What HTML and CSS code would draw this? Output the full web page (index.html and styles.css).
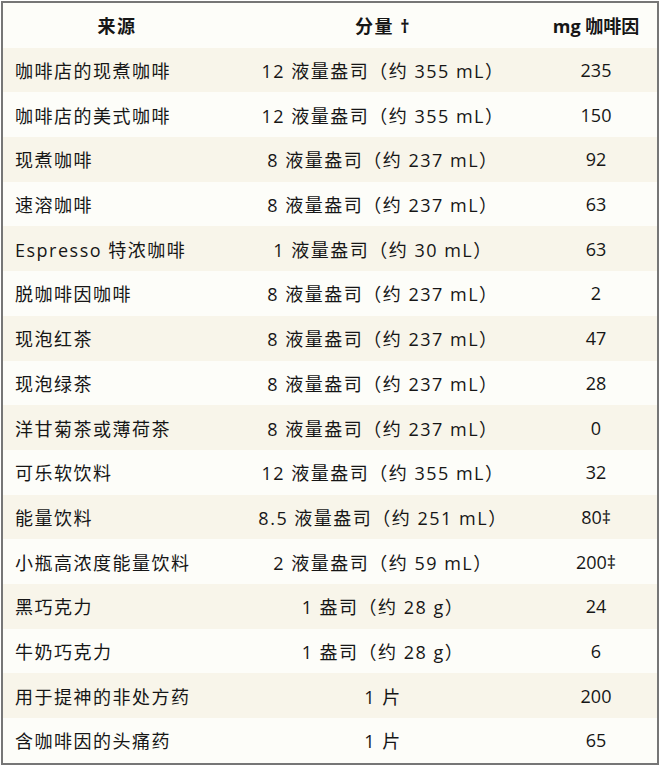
FILE: index.html
```html
<!DOCTYPE html>
<html lang="zh-CN">
<head>
<meta charset="utf-8">
<link rel="stylesheet" href="styles.css">
</head>
<body>
<div class="table">
  <div class="row head">
    <div class="c1">来源</div><div class="c2">分量 †</div><div class="c3">mg 咖啡因</div>
  </div>
  <div class="row">
    <div class="c1">咖啡店的现煮咖啡</div><div class="c2">12 液量盎司（约 355 mL）</div><div class="c3">235</div>
  </div>
  <div class="row">
    <div class="c1">咖啡店的美式咖啡</div><div class="c2">12 液量盎司（约 355 mL）</div><div class="c3">150</div>
  </div>
  <div class="row">
    <div class="c1">现煮咖啡</div><div class="c2">8 液量盎司（约 237 mL）</div><div class="c3">92</div>
  </div>
  <div class="row">
    <div class="c1">速溶咖啡</div><div class="c2">8 液量盎司（约 237 mL）</div><div class="c3">63</div>
  </div>
  <div class="row">
    <div class="c1">Espresso 特浓咖啡</div><div class="c2">1 液量盎司（约 30 mL）</div><div class="c3">63</div>
  </div>
  <div class="row">
    <div class="c1">脱咖啡因咖啡</div><div class="c2">8 液量盎司（约 237 mL）</div><div class="c3">2</div>
  </div>
  <div class="row">
    <div class="c1">现泡红茶</div><div class="c2">8 液量盎司（约 237 mL）</div><div class="c3">47</div>
  </div>
  <div class="row">
    <div class="c1">现泡绿茶</div><div class="c2">8 液量盎司（约 237 mL）</div><div class="c3">28</div>
  </div>
  <div class="row">
    <div class="c1">洋甘菊茶或薄荷茶</div><div class="c2">8 液量盎司（约 237 mL）</div><div class="c3">0</div>
  </div>
  <div class="row">
    <div class="c1">可乐软饮料</div><div class="c2">12 液量盎司（约 355 mL）</div><div class="c3">32</div>
  </div>
  <div class="row">
    <div class="c1">能量饮料</div><div class="c2">8.5 液量盎司（约 251 mL）</div><div class="c3">80‡</div>
  </div>
  <div class="row">
    <div class="c1">小瓶高浓度能量饮料</div><div class="c2">2 液量盎司（约 59 mL）</div><div class="c3">200‡</div>
  </div>
  <div class="row">
    <div class="c1">黑巧克力</div><div class="c2">1 盎司（约 28 g）</div><div class="c3">24</div>
  </div>
  <div class="row">
    <div class="c1">牛奶巧克力</div><div class="c2">1 盎司（约 28 g）</div><div class="c3">6</div>
  </div>
  <div class="row">
    <div class="c1">用于提神的非处方药</div><div class="c2">1 片</div><div class="c3">200</div>
  </div>
  <div class="row">
    <div class="c1">含咖啡因的头痛药</div><div class="c2">1 片</div><div class="c3">65</div>
  </div>
</div>
</body>
</html>
```

FILE: styles.css
```css
html, body {
  margin: 0;
  padding: 0;
  background: #ffffff;
}

.table {
  margin: 1px;
  width: 658px;
  box-sizing: border-box;
  border: 2px solid #767676;
  background: #fdfdf9;
  font-family: "Open Sans", "Noto Sans CJK SC", sans-serif;
  font-size: 18px;
  color: #161616;
  display: flex;
  flex-direction: column;
}

.row {
  display: grid;
  grid-template-columns: 228px 304px 1fr;
  height: 44.7px;
  align-items: center;
  letter-spacing: 1.5px;
}

.row:nth-child(even) {
  background: #f8f5ea;
}

.c1 {
  padding-left: 12px;
  white-space: nowrap;
}

.c2 {
  text-align: center;
  white-space: nowrap;
}

.c3 {
  text-align: center;
  white-space: nowrap;
  letter-spacing: 0;
}

.head {
  font-weight: 700;
}

.head .c1 {
  padding-left: 0;
  text-align: center;
}
```
